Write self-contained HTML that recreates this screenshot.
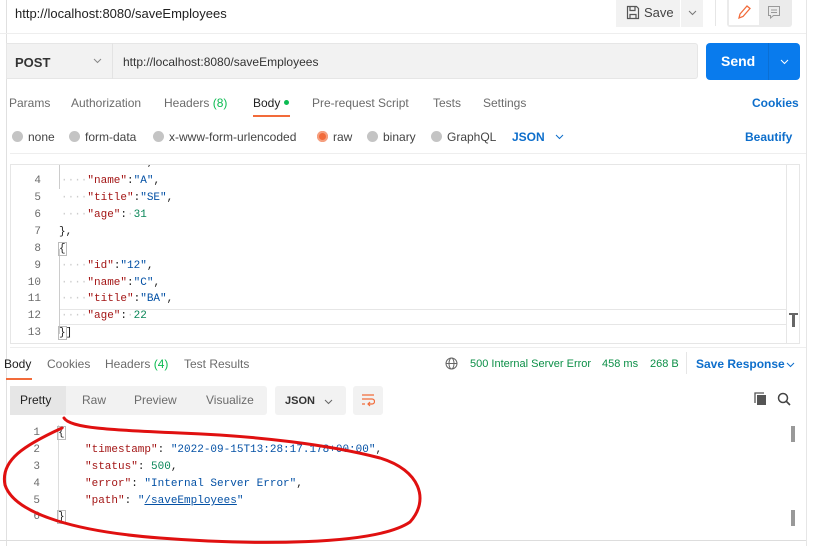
<!DOCTYPE html>
<html><head><meta charset="utf-8"><style>
*{margin:0;padding:0;box-sizing:border-box}
body{width:825px;height:546px;background:#fff;font-family:"Liberation Sans",sans-serif;color:#212121;position:relative;overflow:hidden;font-size:12px}
.a{position:absolute;white-space:nowrap}
.mono{font-family:"Liberation Mono",monospace;font-size:11px}
.ln{color:#6b6b6b;text-align:right;width:30px}
.k{color:#a31515}.s{color:#0451a5}.n{color:#098658}.w{color:#ccc}
.tab{color:#6b6b6b;font-size:12px}
.dot{display:inline-block;width:11px;height:11px;border-radius:50%;background:#c4c4c4;vertical-align:-1px;margin-right:5px}
.chev{display:inline-block;vertical-align:1px}
</style></head><body>
<div class="a" style="left:6px;top:0;width:1px;height:546px;background:#e0e0e0"></div>
<div class="a" style="left:806px;top:0;width:1px;height:546px;background:#e6e6e6"></div>
<div class="a" style="left:15px;top:6px;font-size:13px;color:#212121">http://localhost:8080/saveEmployees</div>
<div class="a" style="left:616px;top:0;width:64px;height:27px;background:#f2f2f2"></div>
<svg class="a" style="left:626px;top:5px" width="14" height="15" viewBox="0 0 14 15"><path d="M1.5 1.5h9l2 2v10h-11z M4 1.5v4h5v-4 M4 13.5v-4h6v4" fill="none" stroke="#555" stroke-width="1.2"/></svg>
<div class="a" style="left:644px;top:5px;font-size:13px;color:#444">Save</div>
<div class="a" style="left:681px;top:0;width:22px;height:27px;background:#f2f2f2"></div>
<svg class="a" style="left:688px;top:10px" width="9" height="6"><path d="M1 1l3.5 3.5L8 1" fill="none" stroke="#777"/></svg>
<div class="a" style="left:715px;top:0;width:1px;height:26px;background:#e6e6e6"></div>
<div class="a" style="left:727px;top:0;width:65px;height:27px;background:#ebebeb;border-radius:0 0 3px 3px"></div>
<div class="a" style="left:729px;top:0;width:30px;height:25px;background:#fff"></div>
<svg class="a" style="left:737px;top:4px" width="14" height="16"><path d="M2 14l1-4 7-8 3 2.5-7 8z" fill="none" stroke="#f26b3a" stroke-width="1.3"/></svg>
<svg class="a" style="left:767px;top:5px" width="14" height="14"><path d="M1.5 1.5h11v9h-6l-3 2.5v-2.5h-2z M4 5h6 M4 7.5h6" fill="none" stroke="#999" stroke-width="1"/></svg>
<div class="a" style="left:0;top:33px;width:806px;height:1px;background:#eee"></div>
<div class="a" style="left:6px;top:43px;width:692px;height:36px;background:#f2f2f2;border:1px solid #e6e6e6;border-radius:0 3px 3px 0"></div>
<div class="a" style="left:112px;top:43px;width:1px;height:36px;background:#e3e3e3"></div>
<div class="a" style="left:15px;top:55px;font-size:13px;font-weight:bold;color:#333">POST</div>
<svg class="a" style="left:93px;top:58px" width="9" height="6"><path d="M1 1l3.5 3.5L8 1" fill="none" stroke="#888"/></svg>
<div class="a" style="left:123px;top:55px;font-size:12px;color:#333">http://localhost:8080/saveEmployees</div>
<div class="a" style="left:706px;top:43px;width:94px;height:37px;background:#097bed;border-radius:4px"></div>
<div class="a" style="left:768px;top:43px;width:1px;height:37px;background:#0a6fd4"></div>
<div class="a" style="left:721px;top:53px;font-size:14px;font-weight:bold;color:#fff">Send</div>
<svg class="a" style="left:780px;top:59px" width="9" height="6"><path d="M1 1l3.5 3.5L8 1" fill="none" stroke="#fff"/></svg>
<div class="a tab" style="left:9px;top:96px">Params</div>
<div class="a tab" style="left:71px;top:96px">Authorization</div>
<div class="a tab" style="left:164px;top:96px">Headers <span style="color:#0cbb52">(8)</span></div>
<div class="a" style="left:253px;top:96px;color:#212121">Body <span style="display:inline-block;width:5px;height:5px;border-radius:50%;background:#0cbb52;vertical-align:2px"></span></div>
<div class="a" style="left:253px;top:115px;width:37px;height:2px;background:#f26b3a"></div>
<div class="a tab" style="left:312px;top:96px">Pre-request Script</div>
<div class="a tab" style="left:433px;top:96px">Tests</div>
<div class="a tab" style="left:483px;top:96px">Settings</div>
<div class="a" style="left:752px;top:96px;color:#0d6ecb;font-weight:bold">Cookies</div>
<div class="a tab" style="left:12px;top:130px;color:#444"><span class="dot"></span>none</div>
<div class="a tab" style="left:69px;top:130px;color:#444"><span class="dot"></span>form-data</div>
<div class="a tab" style="left:153px;top:130px;color:#444"><span class="dot"></span>x-www-form-urlencoded</div>
<div class="a tab" style="left:317px;top:130px;color:#444"><span class="dot" style="background:#f26b3a;box-shadow:inset 0 0 0 2px #f5a080"></span>raw</div>
<div class="a tab" style="left:367px;top:130px;color:#444"><span class="dot"></span>binary</div>
<div class="a tab" style="left:431px;top:130px;color:#444"><span class="dot"></span>GraphQL</div>
<div class="a" style="left:512px;top:130px;color:#0d6ecb;font-weight:bold">JSON</div>
<svg class="a" style="left:555px;top:134px" width="9" height="6"><path d="M1 1l3.5 3.5L8 1" fill="none" stroke="#0d6ecb"/></svg>
<div class="a" style="left:745px;top:130px;color:#0d6ecb;font-weight:bold">Beautify</div>
<div class="a" style="left:10px;top:153px;width:796px;height:1px;background:#eee"></div>

<!-- editor -->
<div class="a mono" style="left:10px;top:164px;width:790px;height:180px;border:1px solid #e6e6e6;overflow:hidden">
 <div class="a" style="left:775px;top:0;width:1px;height:180px;background:#e6e6e6"></div>
 <div class="a" style="left:48px;top:144px;width:727px;height:16px;border-top:1px solid #e6e6e6;border-bottom:1px solid #e6e6e6"></div>
 <div class="a" style="left:48px;top:0;width:1px;height:24px;background:#ccc"></div>
 <div class="a" style="left:48px;top:84px;width:1px;height:85px;background:#ccc"></div>
 <div class="a" style="left:778px;top:148px;width:9px;height:2px;background:#666"></div>
 <div class="a" style="left:781px;top:148px;width:3px;height:14px;background:#666"></div>
 <div class="a ln" style="left:0;top:-8px">3</div><div class="a" style="left:50px;top:-8px"><span class="w">····</span><span class="k">"id"</span>:<span class="s">"11"</span>,</div>
 <div class="a ln" style="left:0;top:10px">4</div><div class="a" style="left:50px;top:10px"><span class="w">····</span><span class="k">"name"</span>:<span class="s">"A"</span>,</div>
 <div class="a ln" style="left:0;top:27px">5</div><div class="a" style="left:50px;top:27px"><span class="w">····</span><span class="k">"title"</span>:<span class="s">"SE"</span>,</div>
 <div class="a ln" style="left:0;top:44px">6</div><div class="a" style="left:50px;top:44px"><span class="w">····</span><span class="k">"age"</span>:<span class="w">·</span><span class="n">31</span></div>
 <div class="a ln" style="left:0;top:61px">7</div><div class="a" style="left:48px;top:61px">},</div>
 <div class="a ln" style="left:0;top:78px">8</div><div class="a" style="left:48px;top:78px;outline:1px solid #bbb">{</div>
 <div class="a ln" style="left:0;top:95px">9</div><div class="a" style="left:50px;top:95px"><span class="w">····</span><span class="k">"id"</span>:<span class="s">"12"</span>,</div>
 <div class="a ln" style="left:0;top:112px">10</div><div class="a" style="left:50px;top:112px"><span class="w">····</span><span class="k">"name"</span>:<span class="s">"C"</span>,</div>
 <div class="a ln" style="left:0;top:128px">11</div><div class="a" style="left:50px;top:128px"><span class="w">····</span><span class="k">"title"</span>:<span class="s">"BA"</span>,</div>
 <div class="a ln" style="left:0;top:145px">12</div><div class="a" style="left:50px;top:145px"><span class="w">····</span><span class="k">"age"</span>:<span class="w">·</span><span class="n">22</span></div>
 <div class="a ln" style="left:0;top:162px">13</div><div class="a" style="left:48px;top:162px"><span style="outline:1px solid #bbb">}</span>]</div>
</div>
<div class="a" style="left:10px;top:347px;width:796px;height:1px;background:#eee"></div>

<div class="a tab" style="left:4px;top:357px;color:#212121">Body</div>
<div class="a" style="left:6px;top:378px;width:26px;height:2px;background:#f26b3a"></div>
<div class="a tab" style="left:47px;top:357px">Cookies</div>
<div class="a tab" style="left:105px;top:357px">Headers <span style="color:#0cbb52">(4)</span></div>
<div class="a tab" style="left:184px;top:357px">Test Results</div>
<svg class="a" style="left:445px;top:357px" width="13" height="13"><circle cx="6.5" cy="6.5" r="5.5" fill="none" stroke="#666"/><ellipse cx="6.5" cy="6.5" rx="2.5" ry="5.5" fill="none" stroke="#666"/><path d="M1 6.5h11" stroke="#666"/></svg>
<div class="a" style="left:470px;top:358px;font-size:11px;color:#0c8f47">500 Internal Server Error</div>
<div class="a" style="left:602px;top:358px;font-size:11px;color:#0c8f47">458 ms</div>
<div class="a" style="left:650px;top:358px;font-size:11px;color:#0c8f47">268 B</div>
<div class="a" style="left:686px;top:352px;width:1px;height:22px;background:#e6e6e6"></div>
<div class="a" style="left:696px;top:357px;color:#0d6ecb;font-weight:bold">Save Response</div>
<svg class="a" style="left:786px;top:362px" width="9" height="6"><path d="M1 1l3.5 3.5L8 1" fill="none" stroke="#0d6ecb"/></svg>
<div class="a" style="left:10px;top:386px;width:257px;height:29px;background:#f2f2f2;border-radius:3px"></div>
<div class="a" style="left:10px;top:386px;width:56px;height:29px;background:#e6e6e6"></div>
<div class="a tab" style="left:20px;top:393px;color:#212121">Pretty</div>
<div class="a tab" style="left:82px;top:393px">Raw</div>
<div class="a tab" style="left:134px;top:393px">Preview</div>
<div class="a tab" style="left:206px;top:393px">Visualize</div>
<div class="a" style="left:275px;top:386px;width:71px;height:29px;background:#f2f2f2;border-radius:3px"></div>
<div class="a" style="left:285px;top:395px;font-size:11px;font-weight:bold;color:#333">JSON</div>
<svg class="a" style="left:324px;top:399px" width="9" height="6"><path d="M1 1l3.5 3.5L8 1" fill="none" stroke="#666"/></svg>
<div class="a" style="left:353px;top:386px;width:30px;height:29px;background:#f2f2f2;border-radius:3px"></div>
<svg class="a" style="left:361px;top:393px" width="14" height="14"><path d="M1 2h12 M1 6h10a2.5 2.5 0 0 1 0 5h-4 M9 9l-2 2 2 2 M1 11h3" fill="none" stroke="#f26b3a" stroke-width="1.2"/></svg>
<svg class="a" style="left:754px;top:392px" width="14" height="14"><rect x="3" y="3" width="9" height="10" fill="#555"/><path d="M1 11V1h9" fill="none" stroke="#555" stroke-width="1.3"/></svg>
<svg class="a" style="left:777px;top:392px" width="14" height="14"><circle cx="6" cy="6" r="4.5" fill="none" stroke="#444" stroke-width="1.5"/><path d="M9.5 9.5l3.5 3.5" stroke="#444" stroke-width="1.6"/></svg>
<div class="a" style="left:58px;top:425px;width:1px;height:94px;background:#ddd"></div>
<div class="a" style="left:791px;top:426px;width:4px;height:16px;background:#999"></div>
<div class="a" style="left:791px;top:510px;width:4px;height:16px;background:#999"></div>
<div class="mono">
<div class="a ln" style="left:10px;top:427px">1</div><div class="a" style="left:58px;top:427px"><span style="outline:1px solid #bbb">{</span></div>
<div class="a ln" style="left:10px;top:444px">2</div><div class="a" style="left:85px;top:444px"><span class="k">"timestamp"</span>: <span class="s">"2022-09-15T13:28:17.178+00:00"</span>,</div>
<div class="a ln" style="left:10px;top:461px">3</div><div class="a" style="left:85px;top:461px"><span class="k">"status"</span>: <span class="n">500</span>,</div>
<div class="a ln" style="left:10px;top:478px">4</div><div class="a" style="left:85px;top:478px"><span class="k">"error"</span>: <span class="s">"Internal Server Error"</span>,</div>
<div class="a ln" style="left:10px;top:495px">5</div><div class="a" style="left:85px;top:495px"><span class="k">"path"</span>: <span class="s">"<u>/saveEmployees</u>"</span></div>
<div class="a ln" style="left:10px;top:511px">6</div><div class="a" style="left:58px;top:511px"><span style="outline:1px solid #bbb">}</span></div>
</div>
<div class="a" style="left:0;top:540px;width:806px;height:1px;background:#ddd"></div>
<svg class="a" style="left:0;top:0" width="825" height="546"><path d="M64 418 C70 428 110 430 180 433 C260 436 330 445 380 458 C420 470 430 500 410 522 C375 546 250 545 160 538 C80 532 15 515 5 485 C0 460 25 445 62 428" fill="none" stroke="#e01010" stroke-width="3" stroke-linecap="round"/></svg>
</body></html>
